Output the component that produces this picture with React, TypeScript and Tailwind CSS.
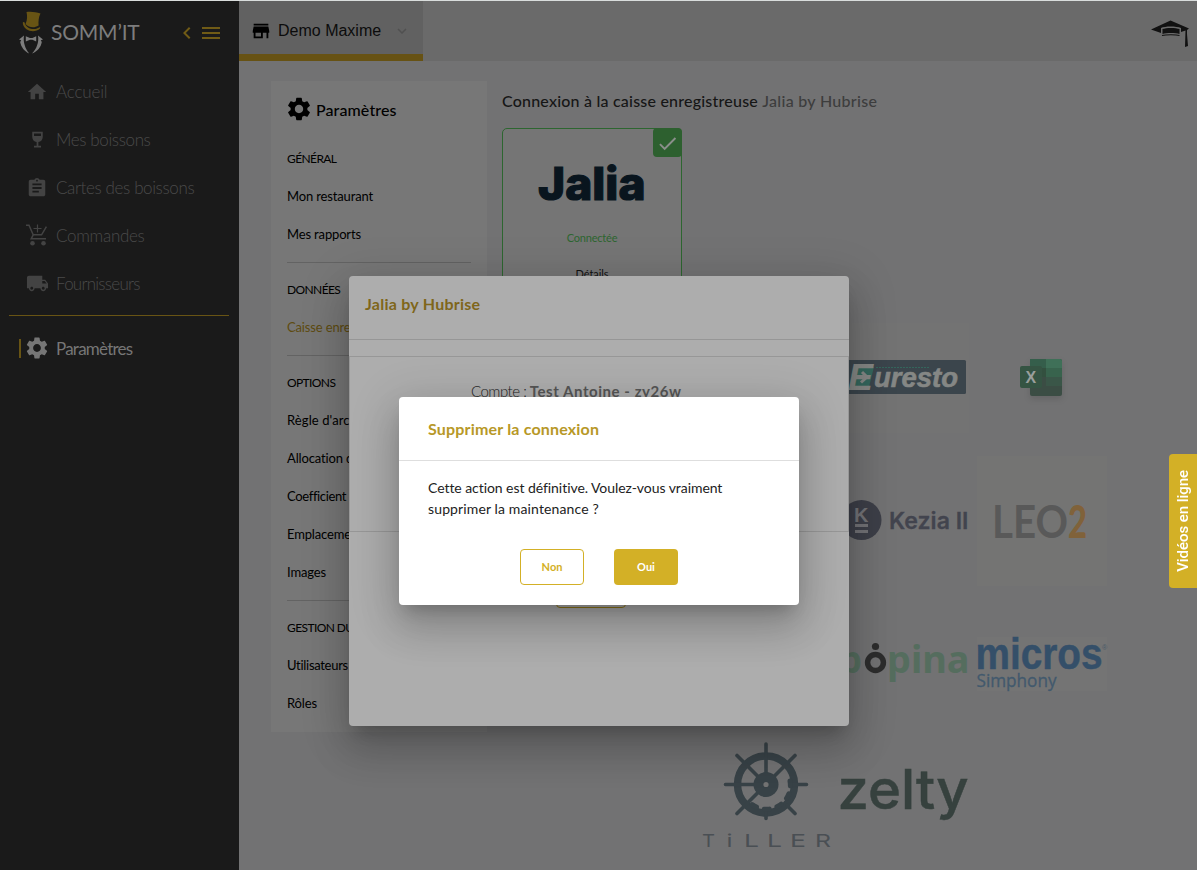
import type { ReactNode } from "react";
import {
  MdAssignment,
  MdCheck,
  MdChevronLeft,
  MdExpandMore,
  MdHome,
  MdLocalShipping,
  MdMenu,
  MdSettings,
  MdStore,
  MdWineBar,
} from "react-icons/md";

function SommitLogo() {
  return (
    <svg width="24" height="44" viewBox="0 0 24 44" className="shrink-0">
      <g fill="#685414">
        <path d="M7.5 2 C11 1.200 17 1.800 21.5 3.600 C19.6 7.500 19.3 11 19.6 15.5 C15 18.5 10 17.6 6.5 14 C8.4 10 8.4 6 7.5 2Z" />
        <path d="M3.8 12.6 C4.2 11.6 5.6 12 5.7 13 C7 18 14.5 21 19.6 17.8 C20.6 16.7 21.6 17.3 21 18.500 C17.5 22 11 21.8 7.5 19.2 C5 17.6 3.6 15 3.8 12.6Z" />
      </g>
      <g fill="#7d7d7d">
        <path d="M6.8 26.2 L11 28 H13.4 L17.2 26.2 V31.4 L13.4 29.8 H11 L6.8 31.4Z" />
        <path d="M5 25.6 L0 29.5 L2.2 30.2 L1.2 32 C2 37 5.500 41.500 10.2 43.500 C6.500 39.500 3.800 32 5 25.600Z" />
        <path d="M19 25.600 L24 29.500 L21.800 30.200 L22.800 32 C22 37 18.500 41.500 13 43.500 C17.500 39.500 20.200 32 19 25.600Z" />
      </g>
    </svg>
  );
}

function CartIcon() {
  return (
    <svg width="22" height="22" viewBox="0 0 22 22" fill="none" stroke="#434343" strokeWidth="1.5" className="-mt-px">
      <path d="M0 1.200 H3 L7.200 10.800 H15.600 L20.400 2.600" />
      <path d="M7.200 10.800 L5.200 14.800 H20" />
      <path d="M11.500 .5 V8.500 M7.500 4.500 H15.500" strokeWidth="1.200" />
      <circle cx="6.500" cy="19.300" r="2.300" fill="#434343" stroke="none" />
      <circle cx="17.500" cy="19.300" r="2.300" fill="#434343" stroke="none" />
    </svg>
  );
}

function NavItem({ icon, label, className }: { icon: ReactNode; label: string; className: string }) {
  return (
    <div className="flex h-12 items-center pl-[25px] text-[#434343]">
      <span className="-mt-px flex w-6 shrink-0 justify-center">{icon}</span>
      <span className={"ml-[7px] text-[17px] font-light text-[#4a4a4a] " + className}>{label}</span>
    </div>
  );
}

function Sidebar() {
  return (
    <aside className="flex w-[239px] shrink-0 flex-col bg-[#1a1a1a]">
      <div className="flex h-[67px] items-start pt-[9px] pl-[19px]">
        <SommitLogo />
        <span className="mt-[7px] ml-[8px] w-[130px] text-[21px] leading-[30px] tracking-[-0.2px] text-[#7d7d7d]">SOMM’IT</span>
        <MdChevronLeft size={24} className="mt-[11px] -ml-[6px] text-[#705b16]" />
        <MdMenu size={24} className="mt-[11px] text-[#705b16]" />
      </div>
      <NavItem icon={<MdHome size={22} />} label="Accueil" className="tracking-[-0.15px]" />
      <NavItem icon={<MdWineBar size={21} />} label="Mes boissons" className="tracking-[-0.38px]" />
      <NavItem icon={<MdAssignment size={22} />} label="Cartes des boissons" className="tracking-[-0.38px]" />
      <NavItem icon={<CartIcon />} label="Commandes" className="tracking-[-0.3px]" />
      <NavItem icon={<MdLocalShipping size={23} />} label="Fournisseurs" className="tracking-[-0.75px]" />
      <div className="mr-[10px] ml-[9px] mt-[7px] h-px bg-[#685414]" />
      <div className="mt-[8px] flex h-12 items-center pl-[19px] text-[#767676]">
        <span className="h-[19px] w-[2px] bg-[#685414]" />
        <MdSettings size={26} className="ml-[3px]" />
        <span className="mt-px ml-[6px] text-[17px] tracking-[-0.77px]">Paramètres</span>
      </div>
    </aside>
  );
}

function TopBar() {
  return (
    <header className="flex h-[60px] shrink-0 justify-between bg-[#6a6a6a]">
      <div className="flex w-[184px] items-center border-b-[7px] border-[#675214] bg-[#616161] pt-[6px] pl-[11px]">
        <MdStore size={22} className="text-black" />
        <span className="ml-[6px] font-['Liberation_Sans'] text-[16px] text-[#0c0c0c]">Demo Maxime</span>
        <MdExpandMore size={18} className="ml-[12px] text-[#505050]" />
      </div>
      <svg width="42" height="32" viewBox="0 0 42 32" className="mt-[16px] mr-[5px]" fill="#111">
        <path d="M1 12.500 L20.500 3.500 L39 11.500 L37 13 V17 L38 29 L35 30 L35.500 13.500 L31 15 V11 C26 9 15 9 11 11 V16 L1 12.500Z" />
        <path d="M12.500 12 C16 10.500 26 10.500 29.500 12 V17 C25 15.800 17 15.800 12.500 17Z" />
        <path d="M12 18.500 C16 17.500 26 17.500 29.500 18.500" stroke="#111" strokeWidth="1.200" fill="none" />
      </svg>
    </header>
  );
}

function MenuTitle({ children }: { children: ReactNode }) {
  return <div className="flex h-[38px] items-center text-[12px] tracking-[-0.6px] whitespace-nowrap">{children}</div>;
}

function MenuItem({ children, active = false }: { children: ReactNode; active?: boolean }) {
  return (
    <div
      className={
        "flex h-[38px] items-center text-[13px] tracking-[-0.15px] whitespace-nowrap " +
        (active ? "text-[#5e4b10]" : "text-black")
      }
    >
      {children}
    </div>
  );
}

function MenuDivider() {
  return <div className="my-2 h-px bg-[#636363]" />;
}

function SettingsMenu() {
  return (
    <nav className="h-[651px] w-[216px] shrink-0 overflow-hidden bg-[#777] px-4 pt-[14px] text-black">
      <div className="mb-[17px] flex h-7 items-center">
        <MdSettings size={28} className="-ml-[2px]" />
        <span className="mt-[2px] ml-[3px] text-[16px] font-medium tracking-[0.1px]">Paramètres</span>
      </div>
      <MenuTitle>GÉNÉRAL</MenuTitle>
      <MenuItem>Mon restaurant</MenuItem>
      <MenuItem>Mes rapports</MenuItem>
      <MenuDivider />
      <MenuTitle>DONNÉES</MenuTitle>
      <MenuItem active>Caisse enregistreuse</MenuItem>
      <MenuDivider />
      <MenuTitle>OPTIONS</MenuTitle>
      <MenuItem><span className="tracking-[0.1px]">Règle d'archivage</span></MenuItem>
      <MenuItem>Allocation des boissons</MenuItem>
      <MenuItem><span className="tracking-[-0.35px]">Coefficient</span></MenuItem>
      <MenuItem>Emplacements</MenuItem>
      <MenuItem>Images</MenuItem>
      <MenuDivider />
      <MenuTitle>GESTION DU COMPTE</MenuTitle>
      <MenuItem><span className="tracking-[-0.3px]">Utilisateurs</span></MenuItem>
      <MenuItem>Rôles</MenuItem>
    </nav>
  );
}

function JaliaCard() {
  return (
    <div className="relative flex h-[178px] w-[180px] flex-col items-center rounded-[5px] border border-[#2d6630] bg-[#757575]">
      <div className="absolute -top-px -right-px flex h-[29px] w-[29px] items-center justify-center rounded-[4px] bg-[#2d602f]">
        <MdCheck size={23} className="mt-px text-[#8b8f8b]" />
      </div>
      <svg width="110" height="50" viewBox="0 0 110 50" className="mt-[29px] overflow-visible">
        <text x="1" y="41.500" fontFamily="Inter, sans-serif" fontWeight="800" fontSize="45" fill="#09151e" stroke="#09151e" strokeWidth="1.2" textLength="107.500" lengthAdjust="spacingAndGlyphs">Jalia</text>
      </svg>
      <span className="mt-[22px] text-[11px] leading-4 tracking-[-0.2px] text-[#2d6630]">Connectée</span>
      <span className="mt-[20px] text-[11px] leading-4 tracking-[-0.1px] text-[#111]">Détails</span>
    </div>
  );
}

function EurestoLogo() {
  return (
    <svg width="130" height="110" viewBox="0 0 130 110" fontFamily="Liberation Sans" fontWeight="700" fontStyle="italic">
      <rect width="130" height="110" fill="#737373" />
      <rect x="0" y="37" width="127" height="34" rx="1.500" fill="#3b454c" />
      <path d="M14 44 H35 L30 64 H10Z" fill="#34665c" />
      <text x="9" y="66.500" fontSize="36" fill="#858785" textLength="25" lengthAdjust="spacingAndGlyphs">E</text>
      <path d="M17 54 H27 M23 49 L28 54 L22 59.500" fill="none" stroke="#858785" strokeWidth="3" />
      <text x="35" y="63.500" fontSize="27" fill="#858785" stroke="#858785" strokeWidth="0.600" textLength="84" lengthAdjust="spacingAndGlyphs">uresto</text>
      <path d="M37 44.500 H90" stroke="#34665c" strokeWidth="1.200" strokeDasharray="2 1" />
    </svg>
  );
}

function ExcelLogo() {
  return (
    <svg width="130" height="110" viewBox="-10 0 130 110">
      <rect x="43" y="36" width="32" height="37" rx="2" fill="#3b4d44" className="drop-shadow-md" />
      <path d="M43 36 H59 V45 H43Z" fill="#355e4b" />
      <path d="M59 36 H73 Q75 36 75 38 V45 H59Z" fill="#3f7058" />
      <path d="M43 45 H59 V54 H43Z" fill="#33503f" />
      <path d="M59 45 H75 V54 H59Z" fill="#38634d" />
      <path d="M59 54 H75 V63 H59Z" fill="#3a5648" />
      <rect x="33" y="43" width="22" height="22" rx="2" fill="#355443" />
      <text x="38.500" y="59.500" fontFamily="Liberation Sans" fontWeight="700" fontSize="16" fill="#9a9f9c">X</text>
    </svg>
  );
}

function KeziaLogo() {
  return (
    <svg width="130" height="130" viewBox="0 0 130 130">
      <circle cx="22.500" cy="64" r="20" fill="#3d3f48" />
      <text x="15" y="66" fontFamily="Liberation Sans" fontWeight="700" fontSize="20" fill="#727276">K</text>
      <path d="M16 69.500 H29 M16 75.500 H29" stroke="#727276" strokeWidth="2.800" />
      <text x="50" y="73" fontFamily="Inter, sans-serif" fontWeight="600" fontSize="23" fill="#42444e" stroke="#42444e" strokeWidth="0.300" textLength="79.500" lengthAdjust="spacingAndGlyphs">Kezia II</text>
    </svg>
  );
}

function LeoLogo() {
  return (
    <svg width="130" height="130" viewBox="0 0 130 130" fontFamily="Lato">
      <rect width="130" height="130" fill="#747473" />
      <text x="15" y="81.500" fontWeight="700" fontSize="45.500" fill="#595959" textLength="76" lengthAdjust="spacingAndGlyphs">LEO</text>
      <text x="91" y="81.500" fontWeight="900" fontSize="46" fill="#80623a" textLength="19" lengthAdjust="spacingAndGlyphs">2</text>
    </svg>
  );
}

function PopinaLogo() {
  return (
    <svg width="130" height="60" viewBox="0 0 130 60" fontFamily="Noto Sans" fontWeight="700" fontSize="37" className="overflow-visible">
      <text x="0" y="38.500" fill="#556d5e" textLength="23" lengthAdjust="spacingAndGlyphs">p</text>
      <circle cx="36.500" cy="28.500" r="7.900" fill="none" stroke="#2d2d2d" strokeWidth="5.500" />
      <circle cx="36.500" cy="12.500" r="3.600" fill="#2d2d2d" />
      <text x="48" y="38.500" fill="#556d5e" textLength="82.500" lengthAdjust="spacingAndGlyphs">pina</text>
    </svg>
  );
}

function MicrosLogo() {
  return (
    <svg width="130" height="54" viewBox="0 0 130 54" className="overflow-visible">
      <rect width="130" height="54" fill="#747474" />
      <text x="-1.500" y="32" fontFamily="Liberation Sans" fontWeight="700" fontSize="45" fill="#344f69" stroke="#344f69" strokeWidth="0.500" textLength="127" lengthAdjust="spacingAndGlyphs">micros</text>
      <text x="125" y="13" fontFamily="Liberation Sans" fontSize="7" fill="#4a5a69">®</text>
      <text x="-0.500" y="49.500" fontFamily="Open Sans" fontSize="17.500" fill="#42596d" stroke="#42596d" strokeWidth="0.300" textLength="80" lengthAdjust="spacingAndGlyphs">Simphony</text>
    </svg>
  );
}

function TillerLogo() {
  return (
    <svg width="130" height="108" viewBox="0 0 130 108" className="overflow-visible">
      <g fill="none" stroke="#384247">
        <circle cx="65" cy="43.500" r="28.500" strokeWidth="7.500" />
        <path d="M65 3 V43 M24.500 43.500 H40 M92 43.500 H105.500 M36.500 43.500 H65 M65 43.500 L94 14.500 M36 14.500 L65 43.500 L36 72.500 M86 64.500 L94 72.500 M65 71 V77.500" strokeWidth="3.600" strokeLinecap="round" />
        <path d="M89 40 A24 24 0 0 1 51 63.500" strokeWidth="5" strokeDasharray="5 8" strokeLinecap="round" />
      </g>
      <circle cx="65" cy="43.500" r="12.500" fill="#384247" />
      <circle cx="65" cy="43.500" r="2.600" fill="#737373" />
      <g fontFamily="Inter, sans-serif" fontSize="17" fill="#4a4f54">
        <text x="1" y="105.500" textLength="13" lengthAdjust="spacingAndGlyphs">T</text>
        <text x="25.500" y="105.500" textLength="6" lengthAdjust="spacingAndGlyphs">i</text>
        <text x="43" y="105.500" textLength="15" lengthAdjust="spacingAndGlyphs">L</text>
        <text x="66" y="105.500" textLength="15" lengthAdjust="spacingAndGlyphs">L</text>
        <text x="89" y="105.500" textLength="16" lengthAdjust="spacingAndGlyphs">E</text>
        <text x="114" y="105.500" textLength="16" lengthAdjust="spacingAndGlyphs">R</text>
      </g>
    </svg>
  );
}

function ZeltyLogo() {
  return (
    <svg width="130" height="80" viewBox="0 0 130 80" className="overflow-visible">
      <text x="-1.500" y="54" fontFamily="Inter, sans-serif" fontWeight="500" fontSize="55" fill="#36413e" stroke="#36413e" strokeWidth="0.500" textLength="131" lengthAdjust="spacingAndGlyphs">zelty</text>
    </svg>
  );
}

function LogoRow({ children, className = "h-[143px]" }: { children: ReactNode; className?: string }) {
  return <div className={"flex w-[682px] items-center justify-center gap-2 " + className}>{children}</div>;
}

function RegisterPanel() {
  return (
    <section className="ml-[15px] flex w-[665px] shrink-0 flex-col">
      <h1 className="mt-[8px] mb-[15px] h-6 text-[16px] leading-6 font-medium tracking-[0.21px] whitespace-nowrap text-[#161616]">
        Connexion à la caisse enregistreuse <span className="tracking-[0.3px] text-[#3d3d3d]">Jalia by Hubrise</span>
      </h1>
      <JaliaCard />
      <div className="-ml-[8px] flex flex-col">
        <LogoRow>
          <div className="w-[130px]" />
          <div className="w-[130px]" />
          <EurestoLogo />
          <ExcelLogo />
        </LogoRow>
        <LogoRow>
          <div className="w-[130px]" />
          <div className="w-[130px]" />
          <KeziaLogo />
          <LeoLogo />
        </LogoRow>
        <LogoRow>
          <div className="w-[130px]" />
          <div className="w-[130px]" />
          <PopinaLogo />
          <MicrosLogo />
        </LogoRow>
        <LogoRow className="h-[120px]">
          <TillerLogo />
          <ZeltyLogo />
        </LogoRow>
      </div>
    </section>
  );
}

const dialogShadow =
  "shadow-[0_11px_15px_-7px_rgba(0,0,0,0.2),0_24px_38px_3px_rgba(0,0,0,0.14),0_9px_46px_8px_rgba(0,0,0,0.12)]";

function ConnectionDialog() {
  return (
    <div className={"absolute top-[276px] left-[349px] flex h-[450px] w-[500px] flex-col overflow-hidden rounded-[4px] bg-[#adadad] " + dialogShadow}>
      <div className="h-[64px] border-b border-[#969696] px-4 pt-[16px] text-[16px] leading-6 font-bold tracking-[0.25px] text-[#7f661a]">
        Jalia by Hubrise
      </div>
      <div className="mt-4 h-[176px] border border-[#979797] pt-[22px] pl-[121px] text-[15px] leading-6 font-light tracking-[-0.5px] text-[#222]">
        Compte : <span className="font-bold tracking-[0.55px] text-[#555]">Test Antoine - zy26w</span>
      </div>
      <div className="mt-[40px] ml-[207px] h-9 w-[70px] rounded-[4px] border border-[#917719]" />
    </div>
  );
}

function ConfirmDialog() {
  return (
    <div role="dialog" className={"absolute top-[397px] left-[399px] flex h-[208px] w-[400px] flex-col overflow-hidden rounded-[4px] bg-white " + dialogShadow}>
      <h2 className="h-[64px] border-b border-[#dedede] pt-[20px] pl-[29px] text-[16px] leading-6 font-bold tracking-[0.18px] text-[#b79827]">
        Supprimer la connexion
      </h2>
      <p className="mt-[16px] pl-[29px] text-[14px] leading-[21px] font-normal tracking-[-0.06px] whitespace-nowrap text-[#222]">
        Cette action est définitive. Voulez-vous vraiment
        <br />
        <span className="tracking-[0.13px]">supprimer la maintenance ?</span>
      </p>
      <div className="mt-[30px] flex gap-[30px] pl-[121px] text-[11px] font-bold">
        <button className="h-9 w-16 rounded-[4px] border border-[#d3b026] text-[#d3b026]">Non</button>
        <button className="h-9 w-16 rounded-[4px] bg-[#d3b026] text-white">Oui</button>
      </div>
    </div>
  );
}

export default function App() {
  return (
    <div className="relative flex h-[870px] w-[1197px] overflow-hidden border-t border-[#d9dddc] bg-[#727273] font-['Lato',sans-serif]">
      <Sidebar />
      <main className="flex min-w-0 flex-1 flex-col">
        <TopBar />
        <div className="flex pt-[20px] pl-[32px]">
          <SettingsMenu />
          <RegisterPanel />
        </div>
      </main>
      <div className="absolute -top-px left-0">
        <ConnectionDialog />
        <ConfirmDialog />
      </div>
      <div className="absolute top-[453px] right-0 flex h-[134px] w-[28px] items-center justify-center rounded-l-[4px] bg-[#d3b026]">
        <span className="rotate-180 font-['Roboto'] text-[15px] font-medium tracking-[-0.05px] whitespace-nowrap text-white [writing-mode:vertical-rl]">
          Vidéos en ligne
        </span>
      </div>
    </div>
  );
}
